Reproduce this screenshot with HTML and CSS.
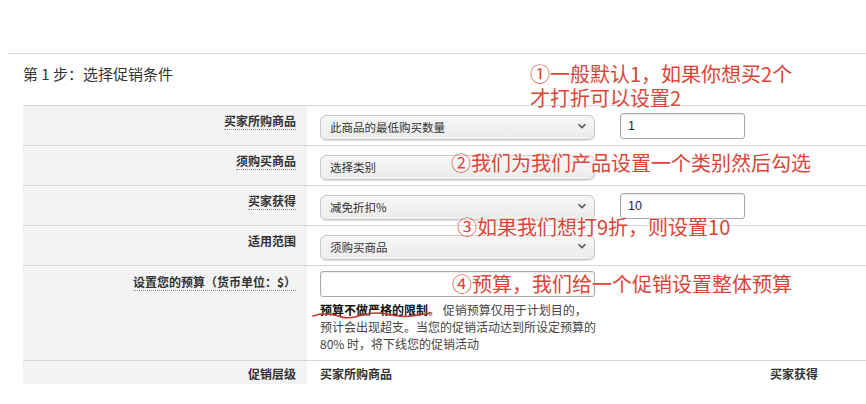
FILE: index.html
```html
<!DOCTYPE html>
<html lang="zh-CN">
<head>
<meta charset="utf-8">
<title>选择促销条件</title>
<link rel="stylesheet" href="styles.css">
</head>
<body>
<div class="page">
  <div class="rule"></div>
  <h2 class="title">第 1 步：选择促销条件</h2>
  <div class="table">
    <div class="row r1">
      <div class="label"><span class="tip">买家所购商品</span></div>
      <div class="value">
        <div class="select-wrap">
          <select class="select"><option>此商品的最低购买数量</option></select>
          <svg class="chev" width="10" height="6" viewBox="0 0 10 6"><path d="M1.5 1.2 L5 4.6 L8.5 1.2" fill="none" stroke="#555" stroke-width="1.5"/></svg>
        </div>
        <input class="input" type="text" value="1">
      </div>
    </div>
    <div class="row">
      <div class="label"><span class="tip">须购买商品</span></div>
      <div class="value">
        <div class="select-wrap">
          <select class="select"><option>选择类别</option></select>
        </div>
      </div>
    </div>
    <div class="row">
      <div class="label"><span class="tip">买家获得</span></div>
      <div class="value">
        <div class="select-wrap">
          <select class="select"><option>减免折扣%</option></select>
          <svg class="chev" width="10" height="6" viewBox="0 0 10 6"><path d="M1.5 1.2 L5 4.6 L8.5 1.2" fill="none" stroke="#555" stroke-width="1.5"/></svg>
        </div>
        <input class="input" type="text" value="10">
      </div>
    </div>
    <div class="row">
      <div class="label"><span>适用范围</span></div>
      <div class="value">
        <div class="select-wrap">
          <select class="select"><option>须购买商品</option></select>
          <svg class="chev" width="10" height="6" viewBox="0 0 10 6"><path d="M1.5 1.2 L5 4.6 L8.5 1.2" fill="none" stroke="#555" stroke-width="1.5"/></svg>
        </div>
      </div>
    </div>
    <div class="row r5">
      <div class="label"><span class="tip">设置您的预算（货币单位：$）</span></div>
      <div class="value col">
        <input class="input budget" type="text" value="">
        <p class="help"><b>预算不做严格的限制</b>。 促销预算仅用于计划目的，预计会出现超支。当您的促销活动达到所设定预算的 80% 时，将下线您的促销活动</p>
      </div>
    </div>
    <div class="row r6">
      <div class="label"><span>促销层级</span></div>
      <div class="value tiers">
        <span class="tier-a">买家所购商品</span>
        <span>买家获得</span>
      </div>
    </div>
  </div>

  <div class="note n1">①一般默认1，如果你想买2个<br>才打折可以设置2</div>
  <div class="note n2">②我们为我们产品设置一个类别然后勾选</div>
  <div class="note n3">③如果我们想打9折，则设置10</div>
  <div class="note n4">④预算，我们给一个促销设置整体预算</div>
  <svg class="squiggle" width="120" height="10" viewBox="0 0 120 10"><path d="M1 5 C10 2, 18 2, 26 5 S40 7, 50 4 S68 1, 80 4 S100 5, 118 2" fill="none" stroke="#c8322a" stroke-width="1.5" stroke-linecap="round"/></svg>
</div>
</body>
</html>
```

FILE: styles.css
```css
html, body {
  margin: 0;
  padding: 0;
  background: #fff;
}
body {
  font-family: "Noto Sans CJK SC", "Noto Sans", sans-serif;
  color: #333;
  width: 866px;
  height: 404px;
  overflow: hidden;
}
.page {
  position: relative;
  padding-top: 53px;
  height: 351px;
}
.rule {
  margin-left: 8px;
  border-top: 1px solid #dcdcdc;
}
.title {
  margin: 10px 0 0 23px;
  font-size: 15px;
  font-weight: normal;
  line-height: 20px;
  color: #333;
}
.table {
  margin: 21px 0 0 23px;
  border-top: 1px solid #d6d6d6;
}
.row {
  display: grid;
  grid-template-columns: 284px 1fr;
  border-bottom: 1px solid #d6d6d6;
  height: 39px;
}
.row.r5 {
  height: 94px;
}
.row.r6 {
  height: 23px;
  border-bottom: none;
}
.label {
  background: #f3f3f3;
  text-align: right;
  padding: 7px 11px 0 0;
  font-size: 12px;
  font-weight: bold;
  line-height: 16px;
  color: #333;
}
.r5 .label {
  padding-top: 8px;
}
.r6 .label {
  padding-top: 5px;
}
.tip {
  border-bottom: 1px dotted #888;
}
.value {
  display: flex;
  align-items: flex-start;
  gap: 25px;
  padding: 7px 0 0 13px;
}
.value.col {
  flex-direction: column;
  gap: 0;
  padding-top: 5px;
}
.select-wrap {
  position: relative;
  width: 275px;
  height: 25px;
}
.select {
  appearance: none;
  -webkit-appearance: none;
  width: 275px;
  height: 25px;
  margin: 0;
  padding: 0 0 0 9px;
  border: 1px solid #c9c9c9;
  border-radius: 6px;
  background: linear-gradient(#f6f6f6, #ececec);
  box-shadow: 0 1px 1px rgba(0,0,0,0.12);
  font-family: "Noto Sans CJK SC", sans-serif;
  font-size: 11.5px;
  color: #333;
}
.chev {
  position: absolute;
  right: 8px;
  top: 10px;
}
.input {
  width: 125px;
  height: 26px;
  box-sizing: border-box;
  margin: 0;
  padding: 0 7px;
  border: 1px solid #a8a8a8;
  border-radius: 3px;
  box-shadow: inset 0 1px 1px rgba(0,0,0,0.08);
  font-family: "Liberation Sans", sans-serif;
  font-size: 12.5px;
  color: #222;
}
.input.budget {
  width: 275px;
}
.help {
  margin: 4px 0 0 0;
  width: 278px;
  font-size: 12px;
  line-height: 17px;
  color: #444;
}
.help b {
  color: #111;
}
.tiers {
  padding-top: 5px;
  gap: 0;
  font-size: 12px;
  font-weight: bold;
  line-height: 16px;
  color: #333;
}
.tier-a {
  width: 450px;
}
.note {
  position: absolute;
  font-size: 20px;
  line-height: 24px;
  color: #dc4437;
  white-space: nowrap;
  text-shadow: 0 0 2px #fff, 0 0 3px rgba(255,255,255,0.9);
}
.n1 { left: 530px; top: 62px; }
.n2 { left: 451px; top: 151px; }
.n3 { left: 457px; top: 215px; }
.n4 { left: 452px; top: 272px; }
.squiggle {
  position: absolute;
  left: 312px;
  top: 311px;
}
```
